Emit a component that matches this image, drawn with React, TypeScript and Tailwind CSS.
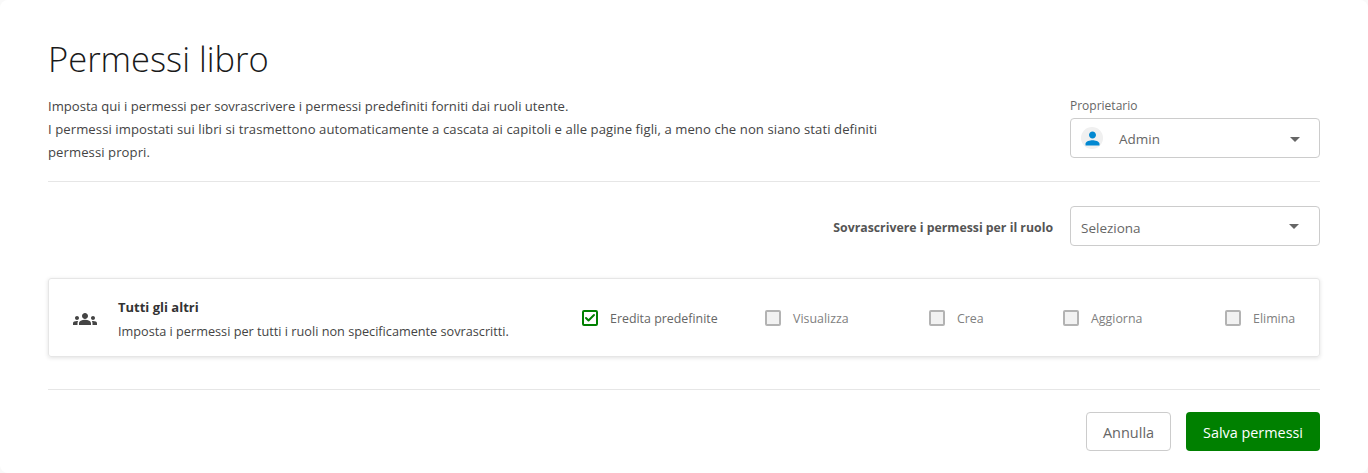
import { Check } from "lucide-react"

function Caret({ className = "" }: { className?: string }) {
  return <span className={`w-0 h-0 border-x-[5px] border-x-transparent border-t-[5px] border-t-[#666] ${className}`} />
}

function PermissionBox({ label, checked, className }: { label: string; checked?: boolean; className: string }) {
  return (
    <label className={`flex items-center mt-[2px] ${className}`}>
      {checked ? (
        <span className="w-4 h-4 rounded-[2px] border-2 border-[#008000] flex items-center justify-center">
          <Check className="w-3 h-3 text-[#008000]" strokeWidth={4} />
        </span>
      ) : (
        <span className="w-4 h-4 rounded-[2px] border-2 border-[#b3b3b3] bg-[#f2f2f2]" />
      )}
      <span className={`ml-3 mt-[2px] text-[12.4px] ${checked ? "text-[#666]" : "text-[#808080]"}`}>{label}</span>
    </label>
  )
}

export default function App() {
  return (
    <div className="w-[1368px] h-[473px] bg-[#f9f9f9] overflow-hidden font-['Open_Sans',sans-serif]">
      <div className="bg-white rounded-[8px] h-full px-12 pt-[35px] flex flex-col">
        <h1 className="text-[34.5px] leading-[48px] font-light text-[#1a1a1a]">Permessi libro</h1>

        <div className="flex justify-between mt-[11px] pb-[17px] border-b border-[#e6e6e6]">
          <p className="w-[840px] text-[13.1px] leading-[23px] text-[#444] pt-[1px]">
            Imposta qui i permessi per sovrascrivere i permessi predefiniti forniti dai ruoli utente.
            <br />
            <span className="tracking-[0.08px]">
              I permessi impostati sui libri si trasmettono automaticamente a cascata ai capitoli e alle pagine figli, a meno che non siano stati definiti permessi propri.
            </span>
          </p>
          <div className="w-[250px] pt-1">
            <div className="text-[12px] leading-[16px] text-[#666] mb-1">Proprietario</div>
            <div className="h-10 border border-[#ccc] rounded-[4px] flex items-center justify-between pl-[10px] pr-[19px]">
              <div className="flex items-center gap-[16px]">
                <span className="w-[22px] h-[22px] rounded-full bg-[#f0f0f0] flex items-center justify-center">
                  <svg viewBox="0 0 24 24" className="w-[21px] h-[21px] fill-[#0288d1]">
                    <path d="M12 12c2.2 0 4-1.8 4-4s-1.8-4-4-4-4 1.8-4 4 1.8 4 4 4zm0 2c-2.7 0-8 1.3-8 4v2h16v-2c0-2.7-5.3-4-8-4z" />
                  </svg>
                </span>
                <span className="text-[13.5px] text-[#666] mt-[3px]">Admin</span>
              </div>
              <Caret className="mt-[2px]" />
            </div>
          </div>
        </div>

        <div className="flex items-center justify-end mt-6 gap-[17px]">
          <span className="text-[12.3px] font-bold text-[#555] mt-1">Sovrascrivere i permessi per il ruolo</span>
          <div className="w-[250px] h-10 border border-[#ccc] rounded-[4px] flex items-center justify-between pl-[10px] pr-5">
            <span className="text-[13.5px] text-[#666] mt-[5px]">Seleziona</span>
            <Caret />
          </div>
        </div>

        <div className="mt-8 h-[79px] rounded-[3px] border border-[#e6e6e6] shadow-[0_1px_4px_rgba(0,0,0,0.12)] flex items-center">
          <svg viewBox="0 0 24 24" className="ml-[24px] mt-[2px] w-6 h-6 fill-[#444]">
            <path d="M12 12.75c1.63 0 3.07.39 4.24.9 1.08.48 1.76 1.56 1.76 2.73V18H6v-1.61c0-1.18.68-2.26 1.76-2.73 1.17-.52 2.61-.91 4.24-.91zM4 13c1.1 0 2-.9 2-2s-.9-2-2-2-2 .9-2 2 .9 2 2 2zm1.13 1.1C4.76 14.04 4.39 14 4 14c-.99 0-1.93.21-2.78.58C.48 14.9 0 15.62 0 16.43V18h4.5v-1.61c0-.83.23-1.61.63-2.29zM20 13c1.1 0 2-.9 2-2s-.9-2-2-2-2 .9-2 2 .9 2 2 2zm4 3.43c0-.81-.48-1.53-1.22-1.85-.85-.37-1.79-.58-2.78-.58-.39 0-.76.04-1.13.1.4.68.63 1.46.63 2.29V18H24v-1.57zM12 6c1.66 0 3 1.34 3 3s-1.34 3-3 3-3-1.34-3-3 1.34-3 3-3z" />
          </svg>
          <div className="ml-[21px] w-[464px] pt-[3px]">
            <div className="text-[13px] leading-[20px] font-bold text-[#333]">Tutti gli altri</div>
            <div className="text-[12.7px] leading-[20px] text-[#444] mt-1">
              Imposta i permessi per tutti i ruoli non specificamente sovrascritti.
            </div>
          </div>
          <PermissionBox label="Eredita predefinite" checked className="w-[183px]" />
          <PermissionBox label="Visualizza" className="w-[164px]" />
          <PermissionBox label="Crea" className="w-[134px]" />
          <PermissionBox label="Aggiorna" className="w-[162px]" />
          <PermissionBox label="Elimina" className="" />
        </div>

        <div className="mt-8 border-t border-[#e6e6e6] flex justify-end gap-[15px] pt-[22px]">
          <button className="w-[85px] h-[39px] pt-[2px] border border-[#ccc] rounded-[4px] text-[14.5px] text-[#666]">Annulla</button>
          <button className="w-[134px] h-[39px] pt-[2px] rounded-[4px] bg-[#008000] text-[14.4px] text-white">Salva permessi</button>
        </div>
      </div>
    </div>
  )
}
